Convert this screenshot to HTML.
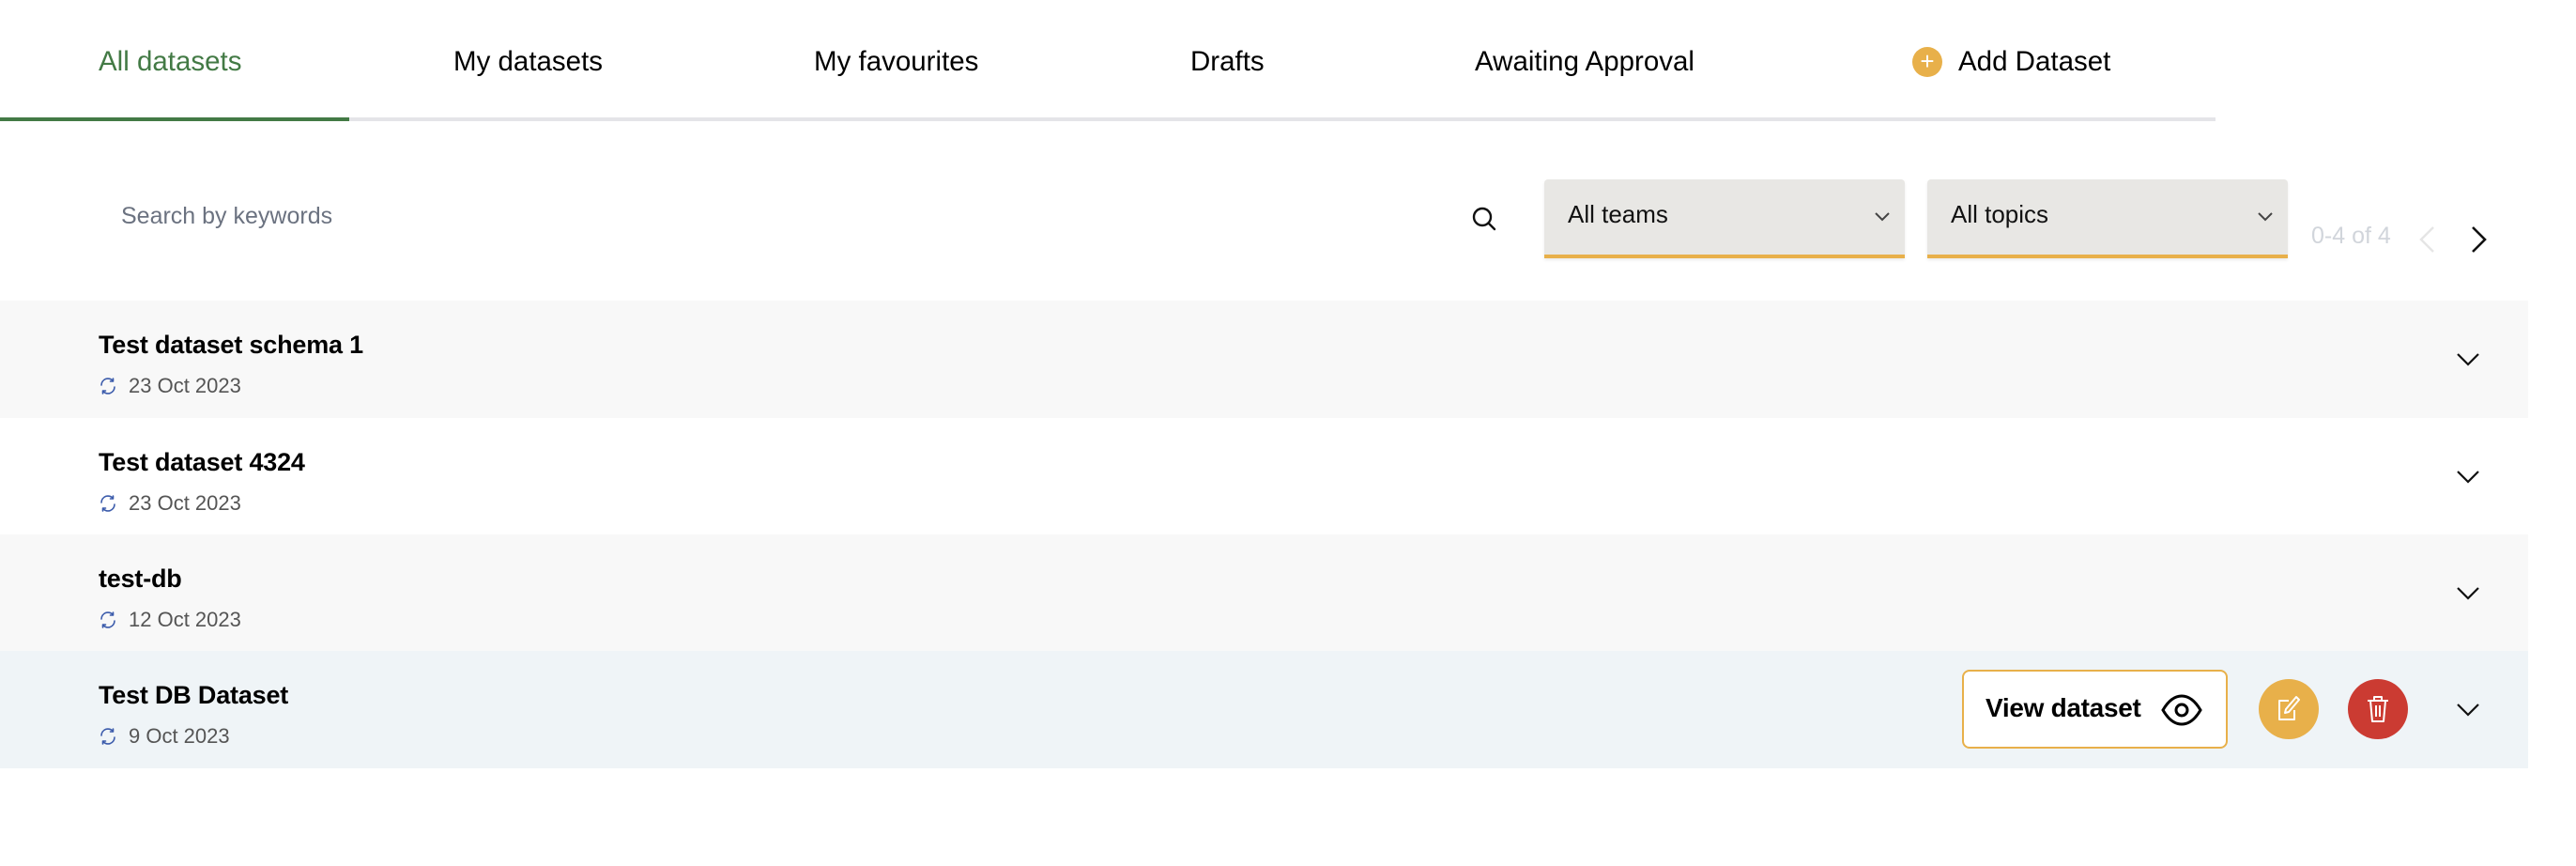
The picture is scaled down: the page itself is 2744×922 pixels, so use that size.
<!DOCTYPE html>
<html><head><meta charset="utf-8"><style>
*{margin:0;padding:0;box-sizing:border-box}
body{width:2744px;height:922px;background:#fff;font-family:"Liberation Sans",sans-serif;position:relative;overflow:hidden}
.a{position:absolute;white-space:nowrap}
.tab{font-size:29.5px;color:#000;top:49px;line-height:34px}
.row{position:absolute;left:0;width:2693px;height:125px}
.title{position:absolute;left:105px;top:31px;font-size:27px;font-weight:bold;line-height:32px;color:#000;letter-spacing:-0.2px}
.date{position:absolute;left:137px;top:78px;font-size:22px;color:#555;line-height:26px}
.ri{position:absolute;left:105px;top:81px}
.chev{position:absolute;left:2617px;top:56px}
.dd{position:absolute;top:191px;width:384px;height:84px;background:#e8e7e4;border-radius:4px 4px 0 0;border-bottom:4px solid #e8b04a;box-shadow:0 2px 3px rgba(0,0,0,.08)}
.dd span{position:absolute;left:25px;top:22px;font-size:26px;color:#111}
.dd svg{position:absolute;left:352px;top:35px}
</style></head><body>
<div class="a tab" style="left:105px;color:#437a45">All datasets</div>
<div class="a tab" style="left:483px">My datasets</div>
<div class="a tab" style="left:867px">My favourites</div>
<div class="a tab" style="left:1268px">Drafts</div>
<div class="a tab" style="left:1571px">Awaiting Approval</div>
<div class="a" style="left:2037px;top:50px;width:32px;height:32px;border-radius:50%;background:#e8b04a;color:#fff;font-size:26px;line-height:31px;text-align:center">+</div>
<div class="a tab" style="left:2086px">Add Dataset</div>
<div class="a" style="left:0;top:125px;width:2360px;height:4px;background:#e4e4e8"></div>
<div class="a" style="left:0;top:125px;width:372px;height:4px;background:#437a45"></div>

<div class="a" style="left:129px;top:216px;font-size:25px;color:#6b7280">Search by keywords</div>
<svg class="a" style="left:1567px;top:219px" width="28" height="28" viewBox="0 0 28 28"><circle cx="12" cy="12" r="9" fill="none" stroke="#111" stroke-width="2.4"/><path d="M18.5 18.5L25 25" stroke="#111" stroke-width="2.4" stroke-linecap="round"/></svg>
<div class="dd" style="left:1645px"><span>All teams</span><svg width="16" height="10" viewBox="0 0 16 10"><path d="M1 1l7 7 7-7" fill="none" stroke="#444" stroke-width="2"/></svg></div>
<div class="dd" style="left:2053px"><span>All topics</span><svg width="16" height="10" viewBox="0 0 16 10"><path d="M1 1l7 7 7-7" fill="none" stroke="#444" stroke-width="2"/></svg></div>
<div class="a" style="left:2462px;top:237px;font-size:25px;color:#d1d5db">0-4 of 4</div>
<svg class="a" style="left:2576px;top:241px" width="18" height="28" viewBox="0 0 18 28"><path d="M16 1L3 14l13 13" fill="none" stroke="#e5e5e5" stroke-width="2.4"/></svg>
<svg class="a" style="left:2632px;top:241px" width="18" height="28" viewBox="0 0 18 28"><path d="M2 1l13 13L2 27" fill="none" stroke="#111" stroke-width="2.6"/></svg>

<svg width="0" height="0" style="position:absolute"><defs>
<symbol id="ref" viewBox="0 0 20 20"><path d="M3 9a7 7 0 0 1 12.5-4.3M15.5 2v3h-3M17 11a7 7 0 0 1-12.5 4.3M4.5 18v-3h3" fill="none" stroke="#3b5bab" stroke-width="1.6" stroke-linecap="round" stroke-linejoin="round"/></symbol>
<symbol id="ch" viewBox="0 0 24 14"><path d="M1 1l11 11L23 1" fill="none" stroke="#111" stroke-width="2.2"/></symbol>
</defs></svg>

<div class="row" style="top:320px;background:#f8f8f8"><div class="title">Test dataset schema 1</div><svg class="ri" width="20" height="20"><use href="#ref"/></svg><div class="date">23 Oct 2023</div><svg class="chev" width="24" height="14"><use href="#ch"/></svg></div>
<div class="row" style="top:445px;background:#fff"><div class="title">Test dataset 4324</div><svg class="ri" width="20" height="20"><use href="#ref"/></svg><div class="date">23 Oct 2023</div><svg class="chev" width="24" height="14"><use href="#ch"/></svg></div>
<div class="row" style="top:569px;background:#f8f8f8"><div class="title">test-db</div><svg class="ri" width="20" height="20"><use href="#ref"/></svg><div class="date">12 Oct 2023</div><svg class="chev" width="24" height="14"><use href="#ch"/></svg></div>
<div class="row" style="top:693px;background:#eff4f7"><div class="title">Test DB Dataset</div><svg class="ri" width="20" height="20"><use href="#ref"/></svg><div class="date">9 Oct 2023</div><svg class="chev" width="24" height="14"><use href="#ch"/></svg>
 <div style="position:absolute;left:2090px;top:20px;width:283px;height:84px;background:#fff;border:2px solid #e8b04a;border-radius:8px">
  <span style="position:absolute;left:23px;top:23px;font-size:28px;font-weight:bold;color:#000;letter-spacing:-0.3px">View dataset</span>
  <svg style="position:absolute;left:209px;top:23px" width="46" height="36" viewBox="0 0 46 36"><path d="M3 18C10 6 17 3 23 3s13 3 20 15c-7 12-14 15-20 15S10 30 3 18z" fill="none" stroke="#000" stroke-width="3"/><circle cx="23" cy="18" r="6" fill="none" stroke="#000" stroke-width="3"/></svg>
 </div>
 <div style="position:absolute;left:2406px;top:30px;width:64px;height:64px;border-radius:50%;background:#e8b04a">
  <svg style="position:absolute;left:18px;top:17px" width="28" height="30" viewBox="0 0 28 30"><path d="M14 6H4v20h16V16" fill="none" stroke="#fff" stroke-width="2" stroke-linejoin="round"/><path d="M22 2l3 3-11 13-4 1 1-4z" fill="none" stroke="#fff" stroke-width="2" stroke-linejoin="round"/></svg>
 </div>
 <div style="position:absolute;left:2501px;top:30px;width:64px;height:64px;border-radius:50%;background:#cb3b32">
  <svg style="position:absolute;left:18px;top:16px" width="28" height="32" viewBox="0 0 28 32"><path d="M3 7h22M10 7V3h8v4M6 7l2 22h12l2-22M12 12v12M16 12v12" fill="none" stroke="#fff" stroke-width="2" stroke-linejoin="round"/></svg>
 </div>
</div>
</body></html>
